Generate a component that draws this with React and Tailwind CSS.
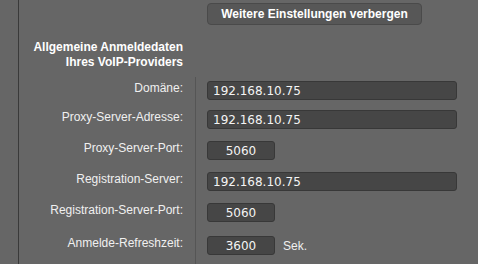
import React from 'react';

const rows = [
  { label: 'Domäne:', value: '192.168.10.75', pad: 'pt-[4px]', wide: true },
  { label: 'Proxy-Server-Adresse:', value: '192.168.10.75', pad: 'pt-[10px]', wide: true },
  { label: 'Proxy-Server-Port:', value: '5060', pad: 'pt-[12px]' },
  { label: 'Registration-Server:', value: '192.168.10.75', pad: 'pt-[12px]', wide: true },
  { label: 'Registration-Server-Port:', value: '5060', pad: 'pt-[12px]' },
  { label: 'Anmelde-Refreshzeit:', value: '3600', pad: 'pt-[14px]', unit: 'Sek.' }
];

const App = () => {
  return (
    <div className="w-[478px] h-[264px] bg-[#666666] overflow-hidden font-['Liberation_Sans',Arial,sans-serif] text-[12px]">
      <div className="ml-[18px] h-full border-l border-[#3a3a3a] flex flex-col">
        {/* Toggle button */}
        <div className="pl-[188px] pt-[3px]">
          <button
            type="button"
            className="w-[215px] h-[22px] bg-[#575757] border border-[#4a4a4a] rounded-[4px] text-white font-bold text-[12px] leading-[20px] text-center"
          >
            Weitere Einstellungen verbergen
          </button>
        </div>

        {/* Section heading */}
        <div className="w-[176px] pr-[12px] pt-[15px] text-right font-bold text-white leading-[15px]">
          Allgemeine Anmeldedaten
          <br />
          Ihres VoIP-Providers
        </div>

        {/* Form rows */}
        <div className="mt-[7px] flex flex-col flex-1">
          {rows.map((row) => (
            <div key={row.label} className="flex">
              <div className={`w-[176px] pr-[12px] text-right text-[#f0f0f0] leading-[15px] ${row.pad}`}>
                {row.label}
              </div>
              <div className={`flex-1 border-l border-[#555555] pl-[11px] flex items-center gap-[8px] ${row.pad}`}>
                <input
                  type="text"
                  defaultValue={row.value}
                  className={`h-[19px] bg-[#464646] border border-[#383838] rounded-[3px] text-[#f4f4f4] text-[12px] font-['DejaVu_Sans',sans-serif] outline-none ${
                    row.wide ? 'w-[250px] px-[5px]' : 'w-[68px] text-center'
                  }`}
                />
                {row.unit && <span className="text-[#f0f0f0]">{row.unit}</span>}
              </div>
            </div>
          ))}
          <div className="flex flex-1">
            <div className="w-[176px]" />
            <div className="flex-1 border-l border-[#555555]" />
          </div>
        </div>
      </div>
    </div>
  );
};

export default App;
